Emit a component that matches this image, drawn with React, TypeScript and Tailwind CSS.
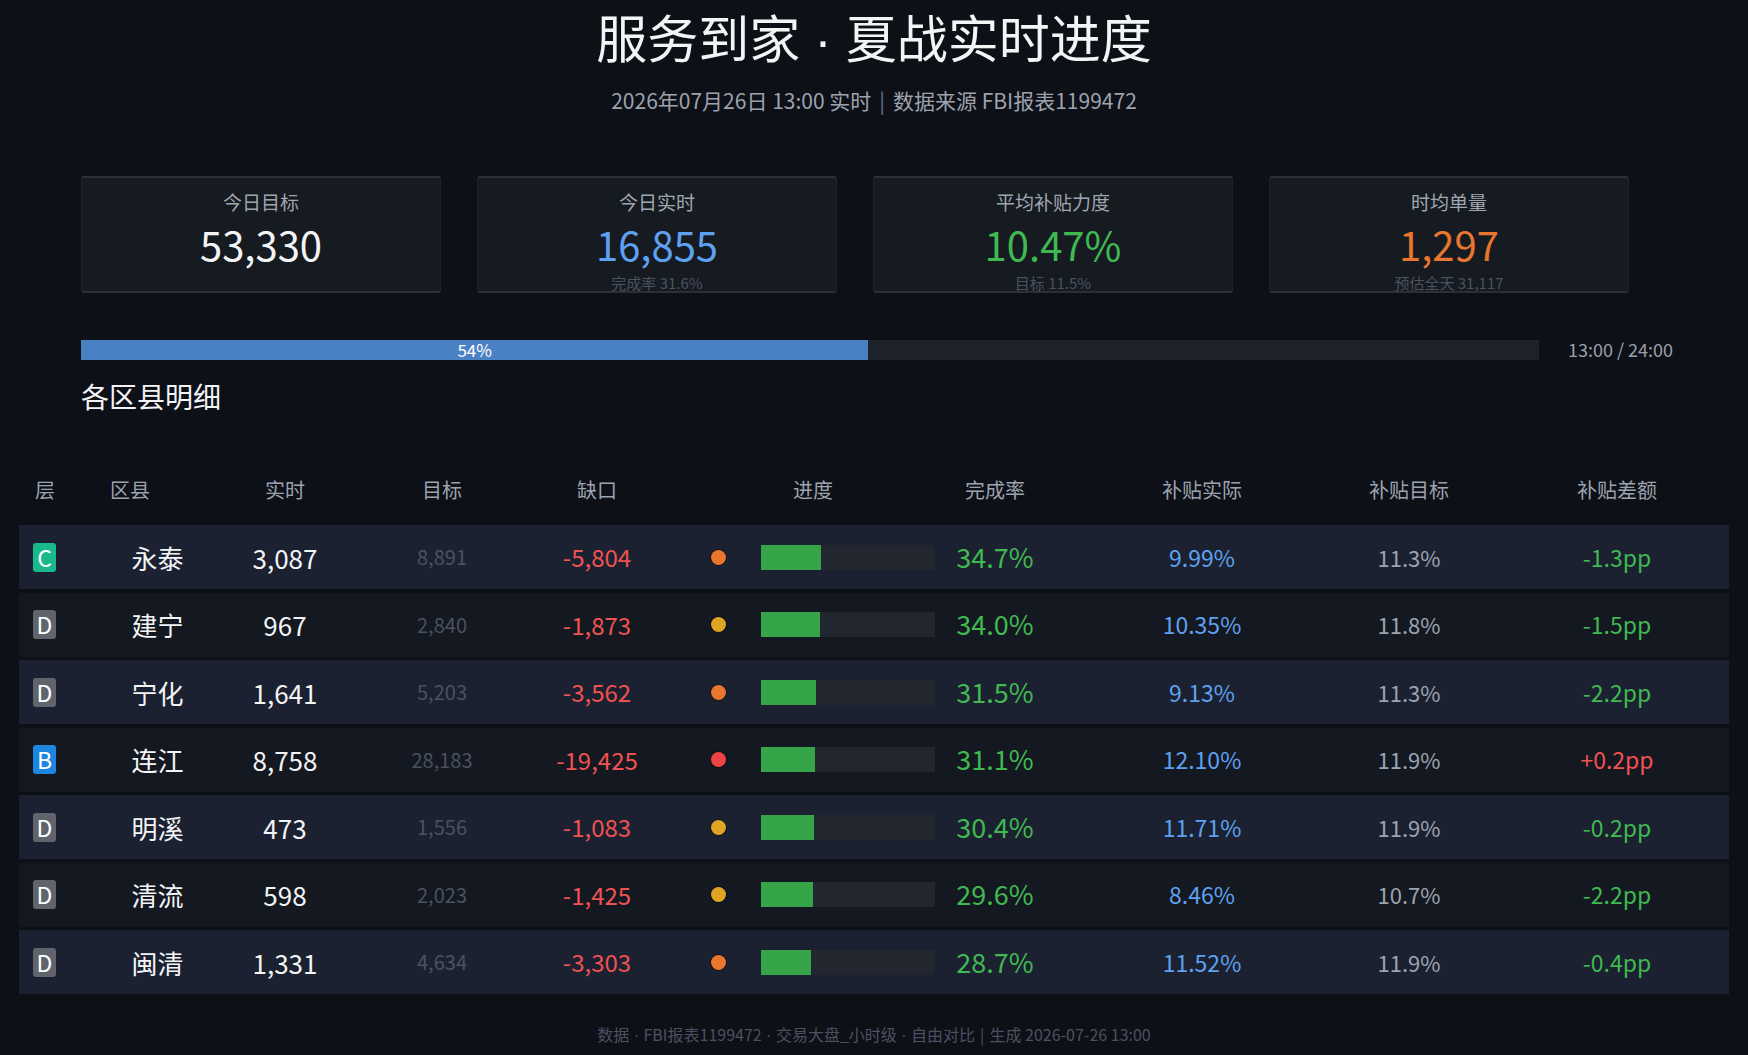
import React from 'react';

type Row = {
  tier: 'B' | 'C' | 'D';
  name: string;
  actual: string;
  target: string;
  gap: string;
  dot: 'orange' | 'amber' | 'red';
  rate: number;
  subsidy: string;
  subsidyTarget: string;
  diff: string;
};

const rows: Row[] = [
  { tier: 'C', name: '永泰', actual: '3,087', target: '8,891', gap: '-5,804', dot: 'orange', rate: 34.7, subsidy: '9.99%', subsidyTarget: '11.3%', diff: '-1.3pp' },
  { tier: 'D', name: '建宁', actual: '967', target: '2,840', gap: '-1,873', dot: 'amber', rate: 34.0, subsidy: '10.35%', subsidyTarget: '11.8%', diff: '-1.5pp' },
  { tier: 'D', name: '宁化', actual: '1,641', target: '5,203', gap: '-3,562', dot: 'orange', rate: 31.5, subsidy: '9.13%', subsidyTarget: '11.3%', diff: '-2.2pp' },
  { tier: 'B', name: '连江', actual: '8,758', target: '28,183', gap: '-19,425', dot: 'red', rate: 31.1, subsidy: '12.10%', subsidyTarget: '11.9%', diff: '+0.2pp' },
  { tier: 'D', name: '明溪', actual: '473', target: '1,556', gap: '-1,083', dot: 'amber', rate: 30.4, subsidy: '11.71%', subsidyTarget: '11.9%', diff: '-0.2pp' },
  { tier: 'D', name: '清流', actual: '598', target: '2,023', gap: '-1,425', dot: 'amber', rate: 29.6, subsidy: '8.46%', subsidyTarget: '10.7%', diff: '-2.2pp' },
  { tier: 'D', name: '闽清', actual: '1,331', target: '4,634', gap: '-3,303', dot: 'orange', rate: 28.7, subsidy: '11.52%', subsidyTarget: '11.9%', diff: '-0.4pp' },
];

const tierColor = {
  B: 'bg-[#1d86e0]',
  C: 'bg-[#1ab98b]',
  D: 'bg-[#60656d]',
};

const dotColor = {
  orange: 'bg-[#e8762e]',
  amber: 'bg-[#e0a424]',
  red: 'bg-[#ef4444]',
};

const cols = 'grid grid-cols-[76px_125px_130px_184px_126px_285px_100px_314px_146px_224px]';

// narrow latin middle dot (the CJK font draws it full-width)
function Dot() {
  return <span className="font-['Liberation_Sans',sans-serif] leading-normal"> · </span>;
}

function KpiCard({ label, value, valueClass, sub }: { label: string; value: string; valueClass: string; sub?: string }) {
  return (
    <div className="h-[117px] overflow-hidden rounded-[3px] border border-[#1f232b] border-y-2 border-y-[#2a2f38] bg-[#161a21] flex flex-col items-center">
      <p className="mt-[11px] text-[19px] leading-[26px] text-[#a0a6b0]">{label}</p>
      <p className={`mt-[5px] text-[40px] leading-[48px] ${valueClass}`}>{value}</p>
      {sub && <p className="mt-[5px] shrink-0 text-[15px] leading-[20px] text-[#4b5262]">{sub}</p>}
    </div>
  );
}

export default function App() {
  return (
    <div
      className="h-[1055px] w-full overflow-hidden bg-[#0d1017] text-[#e5e7eb]"
      style={{ fontFamily: '"Noto Sans CJK SC", "Noto Sans", sans-serif' }}
    >
      {/* Header */}
      <h1 className="h-[66px] pt-[3px] text-center text-[51px] leading-[62px] text-[#f3f4f6]">
        服务到家<Dot />夏战实时进度
      </h1>
      <p className="mt-[20px] text-center text-[21px] leading-[28px] text-[#9ca3af]">
        2026年07月26日 13:00 实时<span className="mx-[8px] text-[#6b7280]">|</span>数据来源 FBI报表1199472
      </p>

      {/* KPI cards */}
      <div className="ml-[81px] mt-[62px] grid w-[1548px] grid-cols-4 gap-[36px]">
        <KpiCard label="今日目标" value="53,330" valueClass="text-[#f3f4f6]" />
        <KpiCard label="今日实时" value="16,855" valueClass="text-[#5ea1f0]" sub="完成率 31.6%" />
        <KpiCard label="平均补贴力度" value="10.47%" valueClass="text-[#3fb950]" sub="目标 11.5%" />
        <KpiCard label="时均单量" value="1,297" valueClass="text-[#e8762e]" sub="预估全天 31,117" />
      </div>

      {/* Time progress */}
      <div className="ml-[81px] mt-[43px] flex items-center">
        <div className="flex h-[20px] w-[1458px] bg-[#1e232b]">
          <div className="flex h-full w-[54%] items-center justify-center bg-[#4a80c4] text-[17px] leading-none text-white">54%</div>
        </div>
        <span className="ml-[29px] text-[18px] text-[#9aa0aa]">13:00 / 24:00</span>
      </div>

      <h2 className="ml-[81px] mt-[15px] text-[28px] leading-[36px] text-[#f3f4f6]">各区县明细</h2>

      {/* Table */}
      <div className="mx-[19px] mt-[52px]">
        <div className={`${cols} h-[48px] items-center text-[20px] text-[#9ca3af]`}>
          <span className="pl-[16px]">层</span>
          <span className="pl-[15px]">区县</span>
          <span className="text-center">实时</span>
          <span className="text-center">目标</span>
          <span className="text-center">缺口</span>
          <span className="pl-[133px]">进度</span>
          <span className="text-center">完成率</span>
          <span className="text-center">补贴实际</span>
          <span className="pr-[46px] text-center">补贴目标</span>
          <span className="text-center">补贴差额</span>
        </div>

        <div className="mt-[11px] flex flex-col gap-[3.5px]">
          {rows.map((r, i) => (
            <div key={r.name} className={`${cols} h-[64px] items-center ${i % 2 === 0 ? 'bg-[#1b2130]' : 'bg-[#141820]'}`}>
              <div className="pl-[14px]">
                <span className={`flex h-[29px] w-[23px] items-center justify-center rounded-[3px] text-[23px] leading-none text-white ${tierColor[r.tier]}`}>
                  {r.tier}
                </span>
              </div>
              <span className="text-center text-[26px] text-[#f3f4f6]">{r.name}</span>
              <span className="text-center text-[26px] text-[#f3f4f6]">{r.actual}</span>
              <span className="text-center text-[20px] text-[#4b5160]">{r.target}</span>
              <span className="text-center text-[24px] text-[#f05252]">{r.gap}</span>
              <div className="flex items-center pl-[51px]">
                <span className={`h-[15px] w-[15px] rounded-full ring-1 ring-black/40 ${dotColor[r.dot]}`} />
                <div className="ml-[35px] h-[25px] w-[174px] bg-[#22262e]">
                  <div className="h-full bg-[#36a549]" style={{ width: `${r.rate}%` }} />
                </div>
              </div>
              <span className="text-center text-[27px] text-[#3fb950]">{r.rate.toFixed(1)}%</span>
              <span className="text-center text-[23px] text-[#5ea1f0]">{r.subsidy}</span>
              <span className="pr-[46px] text-center text-[22px] text-[#9ca3af]">{r.subsidyTarget}</span>
              <span className={`text-center text-[23px] ${r.diff.startsWith('+') ? 'text-[#f05252]' : 'text-[#3fb950]'}`}>{r.diff}</span>
            </div>
          ))}
        </div>
      </div>

      <p className="mt-[28px] text-center text-[16px] leading-[24px] text-[#4b5160]">
        数据<Dot />FBI报表1199472<Dot />交易大盘_小时级<Dot />自由对比<span className="mx-[5px]">|</span>生成 2026-07-26 13:00
      </p>
    </div>
  );
}
